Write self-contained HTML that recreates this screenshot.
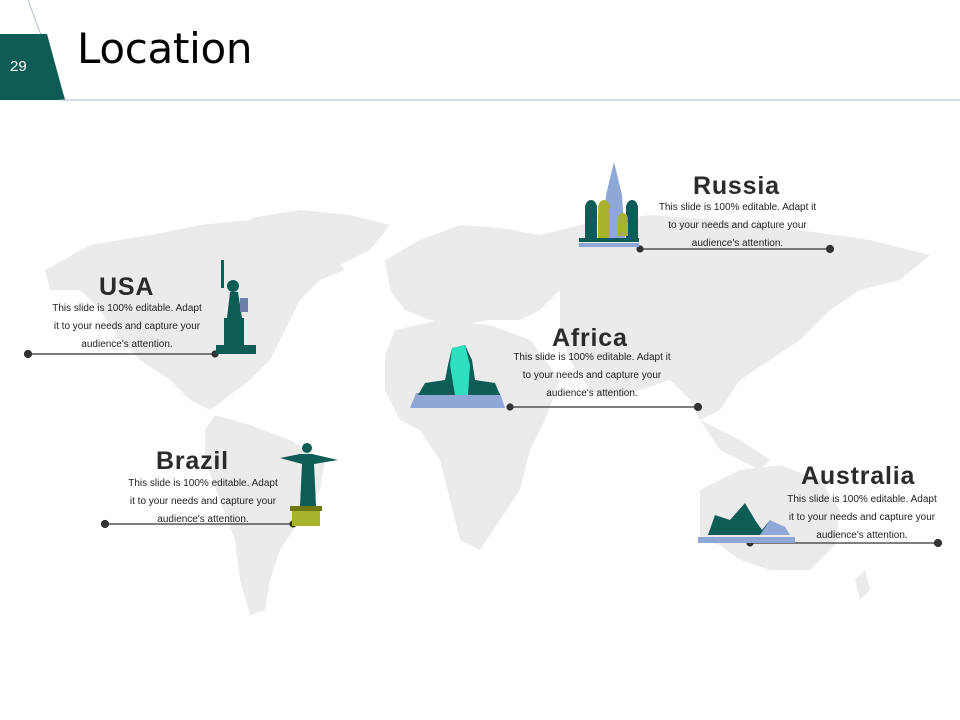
<!DOCTYPE html>
<html><head><meta charset="utf-8"><style>
body{margin:0;width:960px;height:720px;background:#fff;position:relative;overflow:hidden;font-family:"Liberation Sans",sans-serif}
.h{font-weight:bold;font-size:25px;letter-spacing:0.8px;color:#2b2b2b;position:absolute}
.p{position:absolute;font-size:10px;line-height:18px;color:#222;text-align:center;white-space:nowrap}
</style></head><body>
<svg width="960" height="720" style="position:absolute;left:0;top:0">
<g fill="#ebebeb">
<path d="M45 270 L90 245 L150 235 L200 225 L250 220 L300 228 L330 255 L345 270 L320 280 L300 300 L285 330 L270 360 L250 380 L230 395 L210 410 L190 400 L170 380 L140 360 L120 340 L100 310 L80 290 L50 290Z"/>
<path d="M250 218 L300 210 L350 215 L390 225 L370 250 L340 265 L310 258 L280 240Z"/>
<path d="M215 415 L250 425 L290 440 L325 460 L320 490 L300 520 L280 550 L270 580 L265 610 L250 615 L240 580 L235 540 L220 500 L205 460 L205 430Z"/>
<path d="M385 260 L420 240 L460 225 L500 228 L540 235 L560 260 L560 290 L540 310 L520 320 L490 320 L460 325 L430 320 L405 310 L390 290Z"/>
<path d="M395 330 L440 320 L490 325 L530 340 L560 380 L545 420 L530 450 L520 490 L500 520 L480 550 L460 540 L450 500 L440 460 L420 430 L400 420 L385 390 L385 355Z"/>
<path d="M520 240 L580 225 L650 215 L720 220 L800 230 L870 240 L930 255 L900 280 L860 290 L830 310 L800 340 L770 360 L740 380 L720 410 L700 420 L690 400 L670 380 L640 390 L610 400 L590 390 L570 360 L560 330 L560 290Z"/>
<path d="M700 420 L740 440 L770 460 L760 470 L720 450Z"/>
<path d="M700 490 L740 470 L780 465 L820 480 L840 510 L835 545 L810 570 L770 570 L740 560 L720 545 L700 540Z"/>
<path d="M855 580 L865 570 L870 590 L860 600Z"/>
</g>
<path d="M28 0 L65 100" stroke="#a9bccc" stroke-width="1"/>
<path d="M0 34 L47 34 L65 100 L0 100Z" fill="#0d5c55"/>
<line x1="60" y1="100" x2="960" y2="100" stroke="#a9bccc" stroke-width="1"/>
<g stroke="#333" stroke-width="1.2" fill="#333">
<line x1="640" y1="249" x2="830" y2="249"/><circle cx="640" cy="249" r="3"/><circle cx="830" cy="249" r="3.5"/>
<line x1="28" y1="354" x2="215" y2="354"/><circle cx="28" cy="354" r="3.5"/><circle cx="215" cy="354" r="3"/>
<line x1="510" y1="407" x2="698" y2="407"/><circle cx="510" cy="407" r="3"/><circle cx="698" cy="407" r="3.5"/>
<line x1="105" y1="524" x2="293" y2="524"/><circle cx="105" cy="524" r="3.5"/><circle cx="293" cy="524" r="3"/>
<line x1="750" y1="543" x2="938" y2="543"/><circle cx="750" cy="543" r="3"/><circle cx="938" cy="543" r="3.5"/>
</g>
<g>
<rect x="579" y="243" width="60" height="4" fill="#8fa7d6"/>
<path d="M603 240 L606 195 L612 170 L614 162 L616 170 L622 195 L625 240Z" fill="#8fa7d6"/>
<rect x="585" y="210" width="12" height="30" fill="#0d5c55"/><ellipse cx="591" cy="208" rx="6" ry="8" fill="#0d5c55"/>
<rect x="626" y="210" width="12" height="30" fill="#0d5c55"/><ellipse cx="632" cy="208" rx="6" ry="8" fill="#0d5c55"/>
<rect x="598" y="212" width="12" height="30" fill="#a7b32c"/><ellipse cx="604" cy="208" rx="6" ry="8" fill="#a7b32c"/>
<rect x="618" y="222" width="10" height="14" fill="#a7b32c"/><ellipse cx="623" cy="219" rx="5" ry="6" fill="#a7b32c"/>
<rect x="579" y="238" width="60" height="4" fill="#0d5c55"/>
</g>
<g fill="#0d5c55">
<rect x="216" y="345" width="40" height="9"/><rect x="224" y="318" width="20" height="28"/>
<path d="M227 318 L230 292 L238 292 L242 318Z"/><circle cx="233" cy="286" r="6"/><rect x="221" y="260" width="3" height="28"/>
<rect x="240" y="298" width="8" height="14" fill="#6c7fa8"/>
</g>
<g>
<path d="M410 408 L416 393 L500 393 L505 408Z" fill="#8fa7d6"/>
<path d="M418 395 L425 383 L445 380 L448 365 L452 348 L465 345 L472 360 L475 380 L495 383 L500 395Z" fill="#0d5c55"/>
<path d="M450 365 L452 348 L465 345 L470 365 L468 395 L455 395Z" fill="#2fe0c0"/>
</g>
<g>
<rect x="292" y="510" width="28" height="16" fill="#a7b32c"/><rect x="290" y="506" width="32" height="5" fill="#6e7a10"/>
<path d="M280 458 L300 454 L312 454 L338 460 L314 464 L316 506 L300 506 L302 464Z" fill="#0d5c55"/>
<circle cx="307" cy="448" r="5" fill="#0d5c55"/>
</g>
<g>
<rect x="698" y="537" width="97" height="6" fill="#8fa7d6"/>
<path d="M708 535 L715 515 L730 520 L745 503 L755 520 L762 530 L770 520 L785 535Z" fill="#0d5c55"/>
<path d="M760 535 L770 520 L785 527 L790 535Z" fill="#8fa7d6"/>
</g>
</svg>
<div style="position:absolute;left:10px;top:58px;color:#fff;font-size:15px">29</div>
<div style="position:absolute;left:77px;top:24px;font-size:42px;color:#000;font-family:'DejaVu Sans',sans-serif;letter-spacing:-0.3px">Location</div>

<div class="h" style="left:693px;top:172px">Russia</div>
<div class="p" style="left:645px;top:199px;width:185px">This slide is 100% editable. Adapt it<br>to your needs and capture your<br>audience's attention.</div>

<div class="h" style="left:99px;top:273px">USA</div>
<div class="p" style="left:38px;top:300px;width:178px">This slide is 100% editable. Adapt<br>it to your needs and capture your<br>audience's attention.</div>

<div class="h" style="left:552px;top:324px">Africa</div>
<div class="p" style="left:499px;top:349px;width:186px">This slide is 100% editable. Adapt it<br>to your needs and capture your<br>audience's attention.</div>

<div class="h" style="left:156px;top:447px">Brazil</div>
<div class="p" style="left:114px;top:475px;width:178px">This slide is 100% editable. Adapt<br>it to your needs and capture your<br>audience's attention.</div>

<div class="h" style="left:801px;top:462px">Australia</div>
<div class="p" style="left:773px;top:491px;width:178px">This slide is 100% editable. Adapt<br>it to your needs and capture your<br>audience's attention.</div>
</body></html>
